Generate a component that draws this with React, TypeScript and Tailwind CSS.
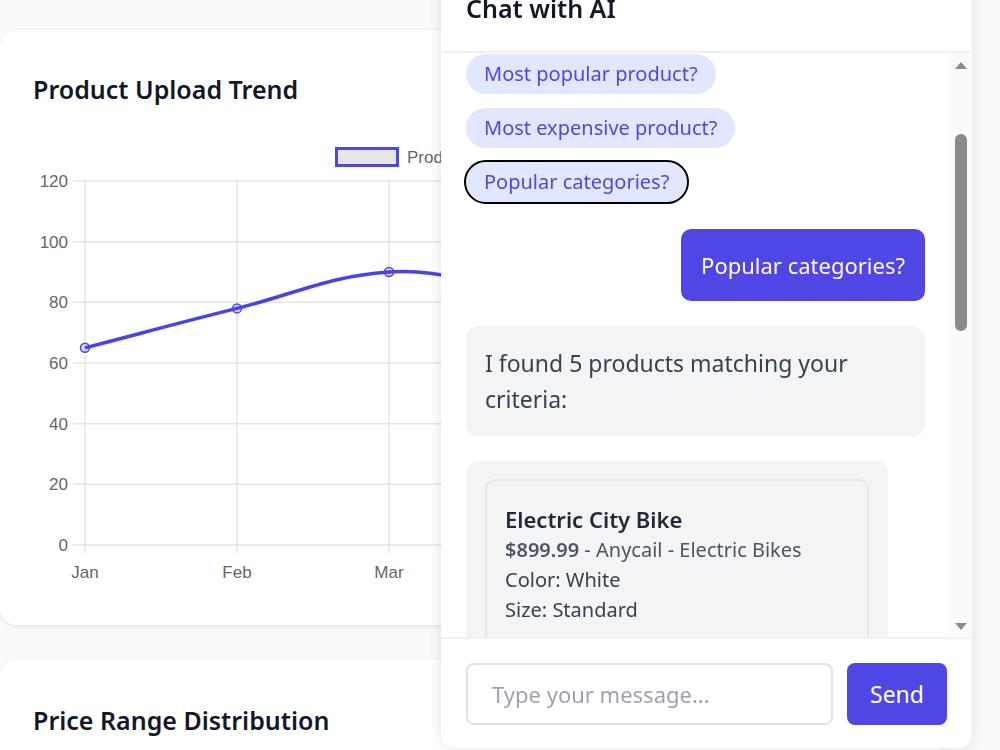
import React from "react";

const uploads = [65, 78, 90, 85, 96, 110];
const months = ["Jan", "Feb", "Mar", "Apr", "May", "Jun"];

// chart geometry (svg coords, svg starts at page y 130)
const X0 = 85;
const STEP = 152;
const Y0 = 415;
const PER = 3.0333;

const pts = uploads.map((v, i) => ({ x: X0 + i * STEP, y: Y0 - v * PER }));

// chart.js style spline, tension 0.4
const splinePath = () => {
  const t = 0.4;
  const cps = pts.map((p, i) => {
    const prev = pts[i - 1] || p;
    const next = pts[i + 1] || p;
    const d01 = Math.hypot(p.x - prev.x, p.y - prev.y);
    const d12 = Math.hypot(next.x - p.x, next.y - p.y);
    const s01 = d01 / (d01 + d12 || 1);
    const s12 = d12 / (d01 + d12 || 1);
    const fa = t * s01;
    const fb = t * s12;
    return {
      px: p.x - fa * (next.x - prev.x),
      py: p.y - fa * (next.y - prev.y),
      nx: p.x + fb * (next.x - prev.x),
      ny: p.y + fb * (next.y - prev.y),
    };
  });
  let d = `M${pts[0].x},${pts[0].y}`;
  for (let i = 1; i < pts.length; i++) {
    d += ` C${cps[i - 1].nx},${cps[i - 1].ny} ${cps[i].px},${cps[i].py} ${pts[i].x},${pts[i].y}`;
  }
  return d;
};

const UploadChart = () => (
  <svg width="940" height="470" className="block" style={{ fontFamily: '"Liberation Sans", Arial, sans-serif' }}>
    {/* legend */}
    <rect x="336.5" y="18.5" width="61" height="17" fill="#e5e5e5" stroke="#4f46e5" strokeWidth="3" />
    <text x="407" y="33" fontSize="17" fill="#666">Product Uploads</text>

    {/* grid */}
    {[0, 20, 40, 60, 80, 100, 120].map((v) => (
      <g key={v}>
        <line x1="73" x2="940" y1={Y0 - v * PER} y2={Y0 - v * PER} stroke="#e5e5e5" strokeWidth="1.5" />
        <text x="68" y={Y0 - v * PER + 6} fontSize="17" fill="#666" textAnchor="end">{v}</text>
      </g>
    ))}
    {months.map((m, i) => (
      <g key={m}>
        <line x1={X0 + i * STEP} x2={X0 + i * STEP} y1={Y0 - 120 * PER} y2={Y0 + 8} stroke="#e5e5e5" strokeWidth="1.5" />
        {i < 3 && (
          <text x={X0 + i * STEP} y="448" fontSize="17" fill="#666" textAnchor="middle">{m}</text>
        )}
      </g>
    ))}

    <path d={splinePath()} fill="none" stroke="#4a42e8" strokeWidth="3.5" />
    {pts.map((p, i) => (
      <circle key={i} cx={p.x} cy={p.y} r="4.5" fill="rgba(79,70,229,0.2)" stroke="#4f46e5" strokeWidth="1.5" />
    ))}
  </svg>
);

const Chip = ({ label, focused }: { label: string; focused?: boolean }) => (
  <button
    className={
      "h-[40px] px-[18px] rounded-full bg-[#e0e7ff] text-[#4f46e5] text-[20px] leading-none " +
      (focused ? "outline-2 outline-black" : "")
    }
  >
    {label}
  </button>
);

const ChatPanel = () => (
  <div className="fixed left-[441px] top-[-30px] bottom-[2px] w-[531px] bg-white rounded-b-[14px] shadow-[0_0_14px_rgba(0,0,0,0.12)] flex flex-col overflow-hidden">
    <div className="h-[83px] shrink-0 border-b-2 border-[#eef0f3] flex items-center px-[25px]">
      <h3 className="text-[25px] font-semibold text-[#111827] pb-[4px]">Chat with AI</h3>
    </div>

    <div className="flex-1 flex min-h-0">
      <div className="flex-1 overflow-hidden pl-[25px] pr-[25px] pt-[1px]">
        <div className="flex flex-col items-start gap-[14px]">
          <Chip label="Most popular product?" />
          <Chip label="Most expensive product?" />
          <Chip label="Popular categories?" focused />
        </div>

        <div className="flex justify-end mt-[27px]">
          <div className="h-[72px] px-[20px] rounded-[10px] bg-[#4f46e5] text-white text-[22px] flex items-center">
            Popular categories?
          </div>
        </div>

        <div className="mt-[25px] rounded-[12px] bg-[#f3f4f6] px-[19px] py-[19px] text-[23px] leading-[36px] text-[#374151]">
          I found 5 products matching your criteria:
        </div>

        <div className="mt-[25px] w-[422px] rounded-[12px] bg-[#f3f4f6] px-[19px] pt-[18px] pb-[18px]">
          <div className="rounded-[10px] border-2 border-[#e5e7eb] px-[18px] pt-[22px] pb-[40px]">
            <div className="text-[22px] leading-[32px] font-semibold text-[#1f2937]">Electric City Bike</div>
            <div className="text-[20px] leading-[30px] text-[#4b5563]">
              <span className="font-semibold">$899.99</span> - Anycail - Electric Bikes
            </div>
            <div className="text-[20px] leading-[30px] text-[#374151]">Color: White</div>
            <div className="text-[20px] leading-[30px] text-[#374151]">Size: Standard</div>
          </div>
        </div>
      </div>

      {/* scrollbar */}
      <div className="w-[22px] shrink-0 bg-[#fafafa] flex flex-col items-center pt-[9px] pb-[7px]">
        <div className="w-0 h-0 border-l-[6px] border-r-[6px] border-b-[7px] border-l-transparent border-r-transparent border-b-[#8a8a8a]" />
        <div className="w-[12px] h-[197px] mt-[65px] rounded-full bg-[#8a8a8a]" />
        <div className="flex-1" />
        <div className="w-0 h-0 border-l-[6px] border-r-[6px] border-t-[7px] border-l-transparent border-r-transparent border-t-[#8a8a8a]" />
      </div>
    </div>

    <div className="shrink-0 border-t-2 border-[#eef0f3] px-[25px] pt-[24px] pb-[23px] flex gap-[14px]">
      <input
        placeholder="Type your message..."
        className="flex-1 min-w-0 h-[62px] rounded-[8px] border-2 border-[#dfe2e7] px-[24px] text-[22px] placeholder:text-[#9ca3af] outline-none"
      />
      <button className="shrink-0 w-[100px] h-[62px] rounded-[8px] bg-[#4f46e5] text-white text-[23px]">Send</button>
    </div>
  </div>
);

export default function App() {
  return (
    <div className="h-screen bg-[#f9fafb] overflow-hidden" style={{ fontFamily: '"Noto Sans", "Open Sans", sans-serif' }}>
      <div className="w-[940px] pt-[30px] flex flex-col gap-[35px]">
        <div className="bg-white rounded-[16px] shadow-[0_1px_4px_rgba(0,0,0,0.1)]">
          <h2 className="px-[33px] pt-[42px] mb-[24px] text-[25px] leading-[34px] font-semibold text-[#111827]">
            Product Upload Trend
          </h2>
          <UploadChart />
          <div className="h-[25px]" />
        </div>

        <div className="bg-white rounded-[16px] shadow-[0_1px_4px_rgba(0,0,0,0.1)] h-[300px]">
          <h2 className="px-[33px] pt-[43px] text-[25px] leading-[34px] font-semibold text-[#111827]">
            Price Range Distribution
          </h2>
        </div>
      </div>
      <ChatPanel />
    </div>
  );
}
